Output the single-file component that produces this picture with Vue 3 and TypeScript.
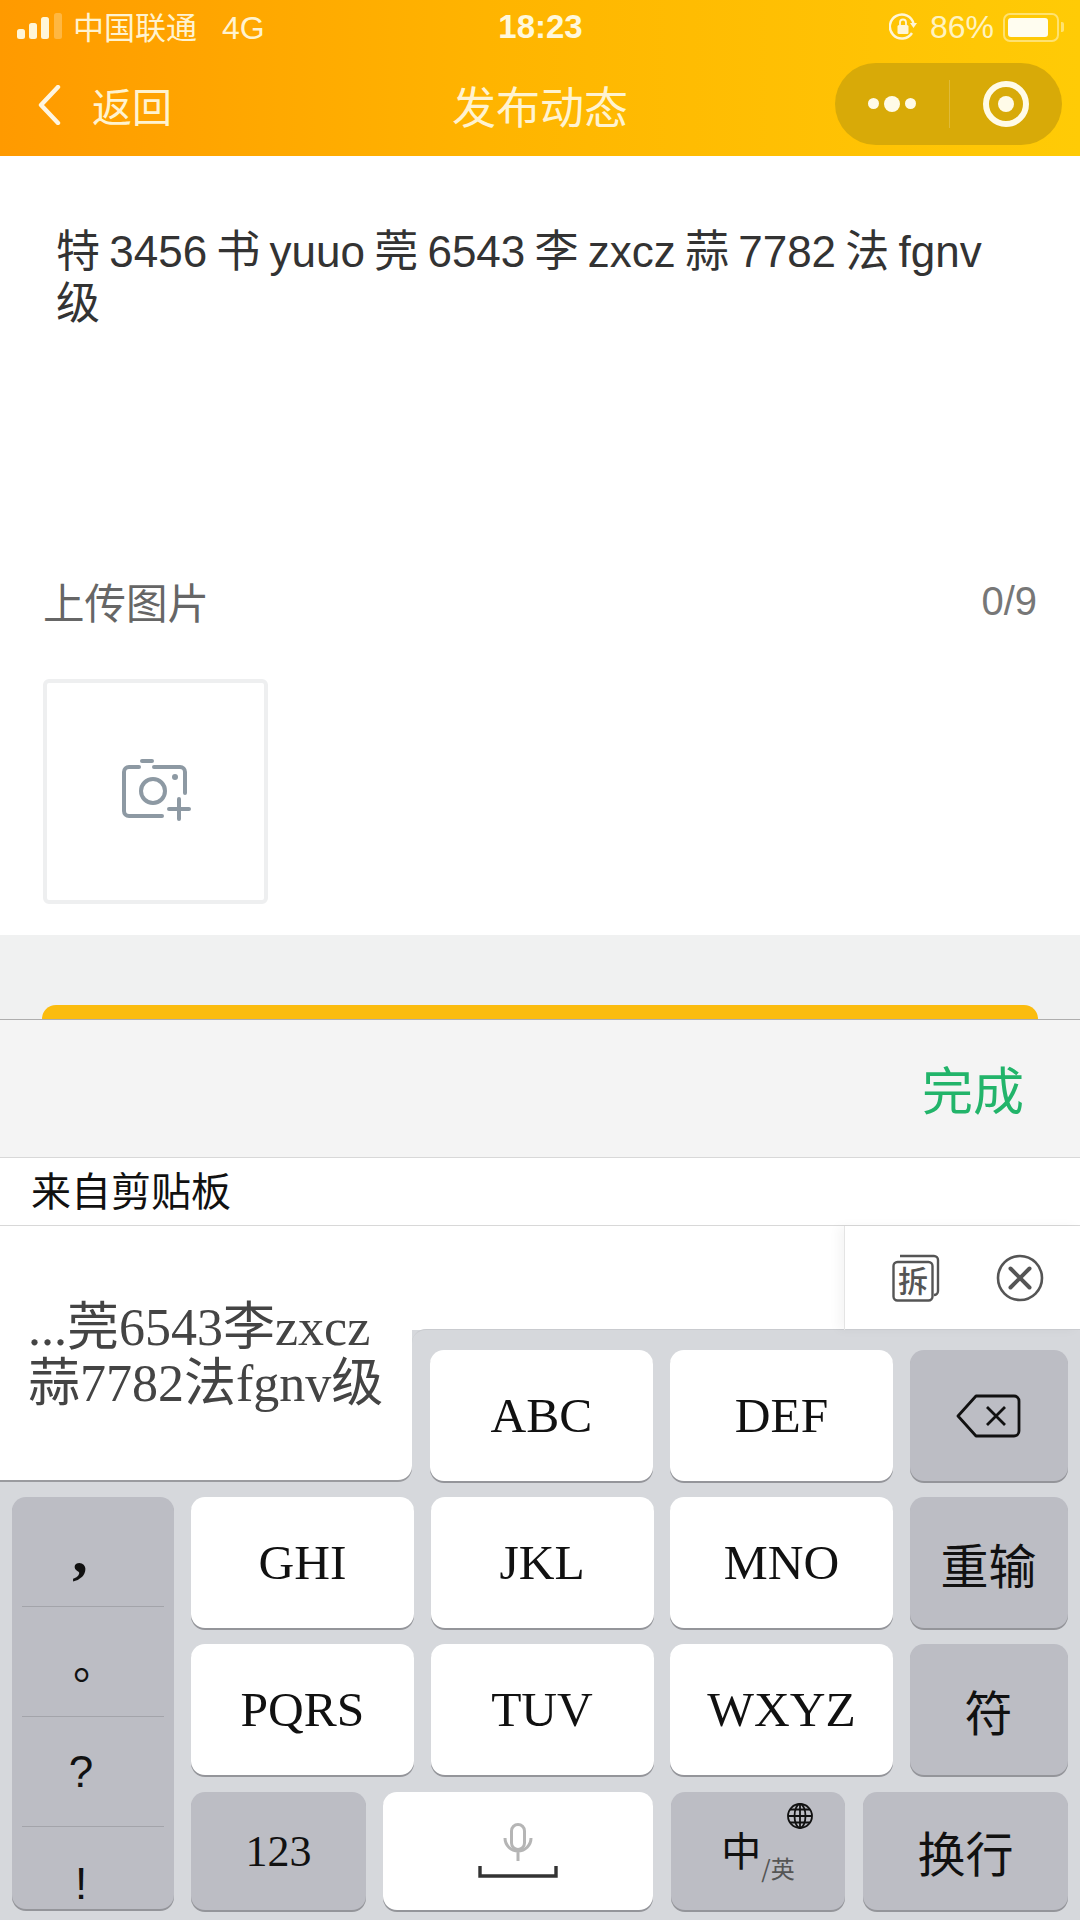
<script setup lang="ts">
// 键盘按键数据
const midKeys = ["GHI", "JKL", "MNO", "重输", "PQRS", "TUV", "WXYZ", "符"];
const isSideKey = (label: string) => label === "重输" || label === "符";
const puncts = [
  { label: ",", cls: "p-comma" },
  { label: "。", cls: "p-dot" },
  { label: "?", cls: "p-ask" },
  { label: "!", cls: "p-bang" },
];
</script>

<template>
  <div class="page">
    <header class="top">
      <div class="status">
        <div class="status-left">
          <svg class="signal" width="45" height="28" viewBox="0 0 45 28">
            <rect x="0" y="16" width="8" height="10" rx="2.5" fill="#fff6d8" />
            <rect x="12" y="10" width="8" height="16" rx="2.5" fill="#fff6d8" />
            <rect x="24" y="4" width="8" height="22" rx="2.5" fill="#fff6d8" />
            <rect x="37" y="0" width="8" height="26" rx="2.5" fill="#fff6d8" opacity="0.3" />
          </svg>
          <span class="carrier">中国联通</span>
          <span class="net">4G</span>
        </div>
        <div class="clock">18:23</div>
        <div class="status-right">
          <svg width="28" height="28" viewBox="0 0 28 28" fill="none">
            <path d="M23 20a12 12 0 1 1 1.6-9" stroke="#fff6d8" stroke-width="2.4" />
            <path d="M21 10h7l-3.5 5z" fill="#fff6d8" />
            <rect x="8.5" y="12" width="11" height="9" rx="1.5" fill="#fff6d8" />
            <path d="M11 12V9.5a3 3 0 0 1 6 0V12" stroke="#fff6d8" stroke-width="1.8" />
          </svg>
          <span class="pct">86%</span>
          <div class="battery"><div class="battery-fill"></div></div>
          <div class="battery-nub"></div>
        </div>
      </div>
      <nav class="nav">
        <div class="back">
          <svg width="24" height="40" viewBox="0 0 24 40" fill="none">
            <path d="M21 2 4 20l17 18" stroke="#fff6e0" stroke-width="4.4" stroke-linecap="round" stroke-linejoin="round" />
          </svg>
          <span>返回</span>
        </div>
        <div class="title">发布动态</div>
        <div class="capsule">
          <div class="capsule-more">
            <i class="dot"></i><i class="dot dot-big"></i><i class="dot"></i>
          </div>
          <div class="capsule-line"></div>
          <div class="capsule-close">
            <svg width="50" height="50" viewBox="0 0 50 50" fill="none">
              <circle cx="25" cy="25" r="20" stroke="#fffbe8" stroke-width="6" />
              <circle cx="25" cy="25" r="8" fill="#fffbe8" />
            </svg>
          </div>
        </div>
      </nav>
    </header>

    <main class="form">
      <p class="content">特 3456 书 yuuo 莞 6543 李 zxcz 蒜 7782 法 fgnv 级</p>
      <div class="upload-head">
        <span>上传图片</span>
        <span class="count">0/9</span>
      </div>
      <div class="upload-box">
        <svg width="70" height="66" viewBox="0 0 70 66" fill="none" stroke="#8d99a3" stroke-width="4" stroke-linecap="round">
          <path d="M18 10H8a5 5 0 0 0-5 5v39a5 5 0 0 0 5 5h33" />
          <path d="M33 10h26a5 5 0 0 1 5 5v21" />
          <path d="M21 4h10" />
          <circle cx="32" cy="34" r="12" />
          <circle cx="54" cy="20" r="3" fill="#8d99a3" stroke="none" />
          <path d="M58 42v20M48 52h20" />
        </svg>
      </div>
    </main>

    <div class="gray-band">
      <div class="submit"></div>
    </div>

    <div class="toolbar"><span class="done">完成</span></div>
    <div class="clip-head">来自剪贴板</div>

    <section class="kb-top">
      <div class="clip-card">
        <div class="clip-text">...莞6543李zxcz<br />蒜7782法fgnv级</div>
      </div>
      <div class="kb-top-right">
        <div class="clip-strip">
          <div class="clip-actions">
            <svg width="48" height="48" viewBox="0 0 48 48" fill="none" stroke="#555" stroke-width="2.4">
              <path d="M8 2h34a4 4 0 0 1 4 4v31a4 4 0 0 1-4 4" />
              <rect x="1.5" y="8" width="39" height="38.5" rx="4" />
              <text x="21" y="38" text-anchor="middle" class="chai">拆</text>
            </svg>
            <svg width="48" height="48" viewBox="0 0 48 48" fill="none" stroke="#555">
              <circle cx="24" cy="24" r="22" stroke-width="2.6" />
              <path d="M14.5 14.5l19 19M33.5 14.5l-19 19" stroke-width="4" stroke-linecap="round" />
            </svg>
          </div>
        </div>
        <div class="row-first">
          <div class="key white">ABC</div>
          <div class="key white">DEF</div>
          <div class="key side">
            <svg width="68" height="46" viewBox="0 0 68 46" fill="none" stroke="#111" stroke-linejoin="round">
              <path d="M21 3h38a5 5 0 0 1 5 5v30a5 5 0 0 1-5 5H21L3 23z" stroke-width="2.8" />
              <path d="M32 14l18 18M50 14L32 32" stroke-width="2.8" />
            </svg>
          </div>
        </div>
      </div>
    </section>

    <section class="kb-bottom">
      <div class="punct-col">
        <div v-for="p in puncts" :key="p.label" class="punct" :class="p.cls">{{ p.label }}</div>
      </div>
      <div class="kb-main">
        <div class="key-grid">
          <div v-for="k in midKeys" :key="k" class="key" :class="isSideKey(k) ? 'side cjk' : 'white'">{{ k }}</div>
        </div>
        <div class="last-row">
          <div class="key side num">123</div>
          <div class="key white space">
            <svg width="80" height="56" viewBox="0 0 80 56" fill="none">
              <rect x="33.5" y="1.5" width="13" height="25" rx="6.5" stroke="#b5b5b5" stroke-width="3" />
              <path d="M27 15a13 13 0 0 0 26 0M40 28v10" stroke="#b5b5b5" stroke-width="3" />
              <path d="M2 43v10h76V43" stroke="#333" stroke-width="3.4" />
            </svg>
          </div>
          <div class="key side lang">
            <svg class="globe" width="28" height="28" viewBox="0 0 28 28" fill="none" stroke="#111" stroke-width="1.8">
              <circle cx="14" cy="14" r="12" />
              <ellipse cx="14" cy="14" rx="5.5" ry="12" />
              <path d="M14 2v24M2 14h24M4 7.5h20M4 20.5h20" />
            </svg>
            <span class="lang-zh">中</span><span class="lang-en">/英</span>
          </div>
          <div class="key side cjk enter">换行</div>
        </div>
      </div>
    </section>
  </div>
</template>

<style scoped>
.page {
  width: 1080px;
  height: 1920px;
  overflow: hidden;
  background: #d6d8dc;
  font-family: "Liberation Sans", "Noto Sans CJK SC", sans-serif;
}

.top {
  height: 156px;
  background: linear-gradient(90deg, #ff9a00 0%, #ffb400 45%, #ffcb06 100%);
  color: #fff3d0;
}

.status {
  height: 54px;
  display: grid;
  grid-template-columns: 1fr auto 1fr;
  align-items: center;
  padding: 0 16px 0 17px;
  font-size: 31px;
}

.status-left {
  display: flex;
  align-items: center;
}

.signal {
  margin-right: 11px;
}

.carrier {
  margin-top: -4px;
}

.net {
  margin: 2px 0 0 25px;
  font-size: 32px;
}

.clock {
  font-size: 33px;
  font-weight: 700;
  color: #fff8dc;
}

.status-right {
  display: flex;
  align-items: center;
  justify-content: flex-end;
}

.pct {
  margin-left: 13px;
  font-size: 32px;
  color: #fff3c0;
}

.battery {
  width: 56px;
  height: 29px;
  margin-left: 9px;
  padding: 3px;
  border: 2px solid rgba(255, 246, 200, 0.55);
  border-radius: 7px;
  box-sizing: border-box;
}

.battery-fill {
  width: 40px;
  height: 100%;
  background: #fffdf0;
  border-radius: 3px;
}

.battery-nub {
  width: 3px;
  height: 10px;
  margin-left: 2px;
  background: rgba(255, 246, 200, 0.55);
  border-radius: 0 2px 2px 0;
}

.nav {
  height: 102px;
  display: grid;
  grid-template-columns: 1fr auto 1fr;
  align-items: center;
  padding: 0 18px;
}

.back {
  display: flex;
  align-items: center;
  gap: 31px;
  margin-left: 19px;
  font-size: 40px;
}

.title {
  font-size: 44px;
}

.capsule {
  justify-self: end;
  width: 227px;
  height: 82px;
  display: flex;
  align-items: center;
  background: #d8aa08;
  border-radius: 41px;
  margin-top: -3px;
}

.capsule-more {
  width: 114px;
  display: flex;
  align-items: center;
  justify-content: center;
  gap: 5px;
}

.dot {
  width: 11px;
  height: 11px;
  background: #fffbe8;
  border-radius: 50%;
}

.dot-big {
  width: 16px;
  height: 16px;
}

.capsule-line {
  width: 1px;
  height: 48px;
  background: rgba(255, 255, 255, 0.2);
}

.capsule-close {
  flex: 1;
  display: flex;
  align-items: center;
  justify-content: center;
}

.form {
  height: 779px;
  background: #fff;
  padding: 70px 43px 0;
  box-sizing: border-box;
}

.content {
  margin: 0;
  padding: 0 37px 0 13px;
  height: 349px;
  font-size: 44px;
  line-height: 52px;
  word-spacing: -3px;
  color: #333;
}

.upload-head {
  display: flex;
  justify-content: space-between;
  align-items: center;
  height: 52px;
  font-size: 41.5px;
  color: #666;
}

.count {
  font-size: 40px;
  color: #777;
}

.upload-box {
  width: 225px;
  height: 225px;
  margin-top: 52px;
  padding-bottom: 4px;
  border: 4px solid #eeeff0;
  border-radius: 6px;
  box-sizing: border-box;
  display: flex;
  align-items: center;
  justify-content: center;
}

.gray-band {
  height: 84px;
  background: #f0f1f1;
  padding: 70px 42px 0;
  box-sizing: border-box;
  overflow: hidden;
}

.submit {
  height: 40px;
  background: #fbbc0e;
  border-radius: 14px 14px 0 0;
}

.toolbar {
  height: 139px;
  box-sizing: border-box;
  border-top: 1px solid #aeaeae;
  border-bottom: 1px solid #d8d8d8;
  background: #f4f4f4;
  display: flex;
  align-items: center;
  justify-content: flex-end;
  padding: 0 56px 2px 0;
}

.done {
  font-size: 51px;
  color: #22b46a;
}

.clip-head {
  height: 68px;
  box-sizing: border-box;
  background: #fff;
  border-bottom: 1px solid #d8d8d8;
  padding-left: 31px;
  font-size: 40px;
  line-height: 69px;
  color: #111;
}

.kb-top {
  height: 256px;
  display: flex;
}

.clip-card {
  width: 412px;
  height: 254px;
  flex-shrink: 0;
  box-sizing: border-box;
  background: #fff;
  border-radius: 0 0 14px 0;
  box-shadow: 0 2px 0 #9a9b9f;
  padding: 6px 0 0 28px;
  display: flex;
  align-items: center;
}

.clip-text {
  font-family: "Liberation Serif", "Noto Sans CJK SC", serif;
  font-size: 52px;
  line-height: 56px;
  color: #444;
  white-space: nowrap;
}

.kb-top-right {
  flex: 1;
  background: linear-gradient(#fff 104px, #d6d8dc 104px);
}

.clip-strip {
  height: 104px;
  box-sizing: border-box;
  background: #fff;
  display: flex;
  justify-content: flex-end;
}

.clip-actions {
  width: 236px;
  box-sizing: border-box;
  border-left: 1px solid #e4e4e4;
  box-shadow: -6px 0 10px rgba(0, 0, 0, 0.04);
  padding: 28px 0 0 47px;
  display: flex;
  align-items: flex-start;
  gap: 56px;
}

.chai {
  font-family: "Noto Sans CJK SC", sans-serif;
  font-size: 30px;
  font-weight: 500;
  fill: #555;
  stroke: none;
}

.row-first {
  display: grid;
  grid-template-columns: 223px 223px 158px;
  gap: 17px;
  height: 131px;
  padding: 20px 12px 0 18px;
  background: #d6d8dc;
  border-top: 1px solid #c9cbcf;
  margin-top: -1px;
  border-radius: 14px 0 0 0;
}

.key {
  display: flex;
  align-items: center;
  justify-content: center;
  border-radius: 14px;
  font-family: "Liberation Serif", "Noto Sans CJK SC", serif;
  font-size: 49.5px;
  color: #111;
}

.white {
  background: #fff;
  box-shadow: 0 2px 0 #94959a;
}

.side {
  background: #bcbdc4;
  box-shadow: 0 2px 0 #94959a;
}

.cjk {
  font-family: "Noto Sans CJK SC", sans-serif;
  font-size: 48px;
}

.kb-bottom {
  display: flex;
  padding: 15px 12px 0 12px;
  gap: 17px;
}

.punct-col {
  width: 162px;
  height: 412px;
  flex-shrink: 0;
  display: flex;
  flex-direction: column;
  background: #bcbdc4;
  border-radius: 14px;
  box-shadow: 0 2px 0 #94959a;
  overflow: hidden;
}

.punct {
  height: 110px;
  flex-shrink: 0;
  margin: 0 10px;
  box-sizing: border-box;
  border-bottom: 1px solid #a3a4aa;
  display: flex;
  align-items: center;
  justify-content: center;
  font-family: "Liberation Sans", "Noto Sans CJK SC", sans-serif;
  font-size: 44px;
  color: #111;
  padding-right: 24px;
}

.p-comma {
  font-family: "Liberation Serif", serif;
  font-size: 62px;
  font-weight: 700;
  padding-right: 26px;
}

.p-dot {
  padding: 0 0 4px 4px;
}

.p-bang {
  height: 82px;
  border-bottom: none;
  padding-top: 32px;
}

.kb-main {
  flex: 1;
}

.key-grid {
  display: grid;
  grid-template-columns: 223px 223px 223px 158px;
  grid-auto-rows: 131px;
  column-gap: 16.5px;
  row-gap: 16px;
}

.last-row {
  display: flex;
  height: 118px;
  margin-top: 17px;
}

.num {
  width: 175px;
  font-size: 44px;
}

.space {
  width: 270px;
  margin-left: 17px;
}

.lang {
  position: relative;
  width: 174px;
  margin-left: 18px;
  font-family: "Noto Sans CJK SC", sans-serif;
}

.globe {
  position: absolute;
  top: 10px;
  right: 31px;
}

.lang-zh {
  font-size: 40px;
  margin-bottom: 4px;
}

.lang-en {
  font-size: 24px;
  color: #555;
  margin-top: 32px;
}

.enter {
  width: 205px;
  margin-left: 18px;
}
</style>

<style>
html,
body {
  margin: 0;
  padding: 0;
}
</style>
